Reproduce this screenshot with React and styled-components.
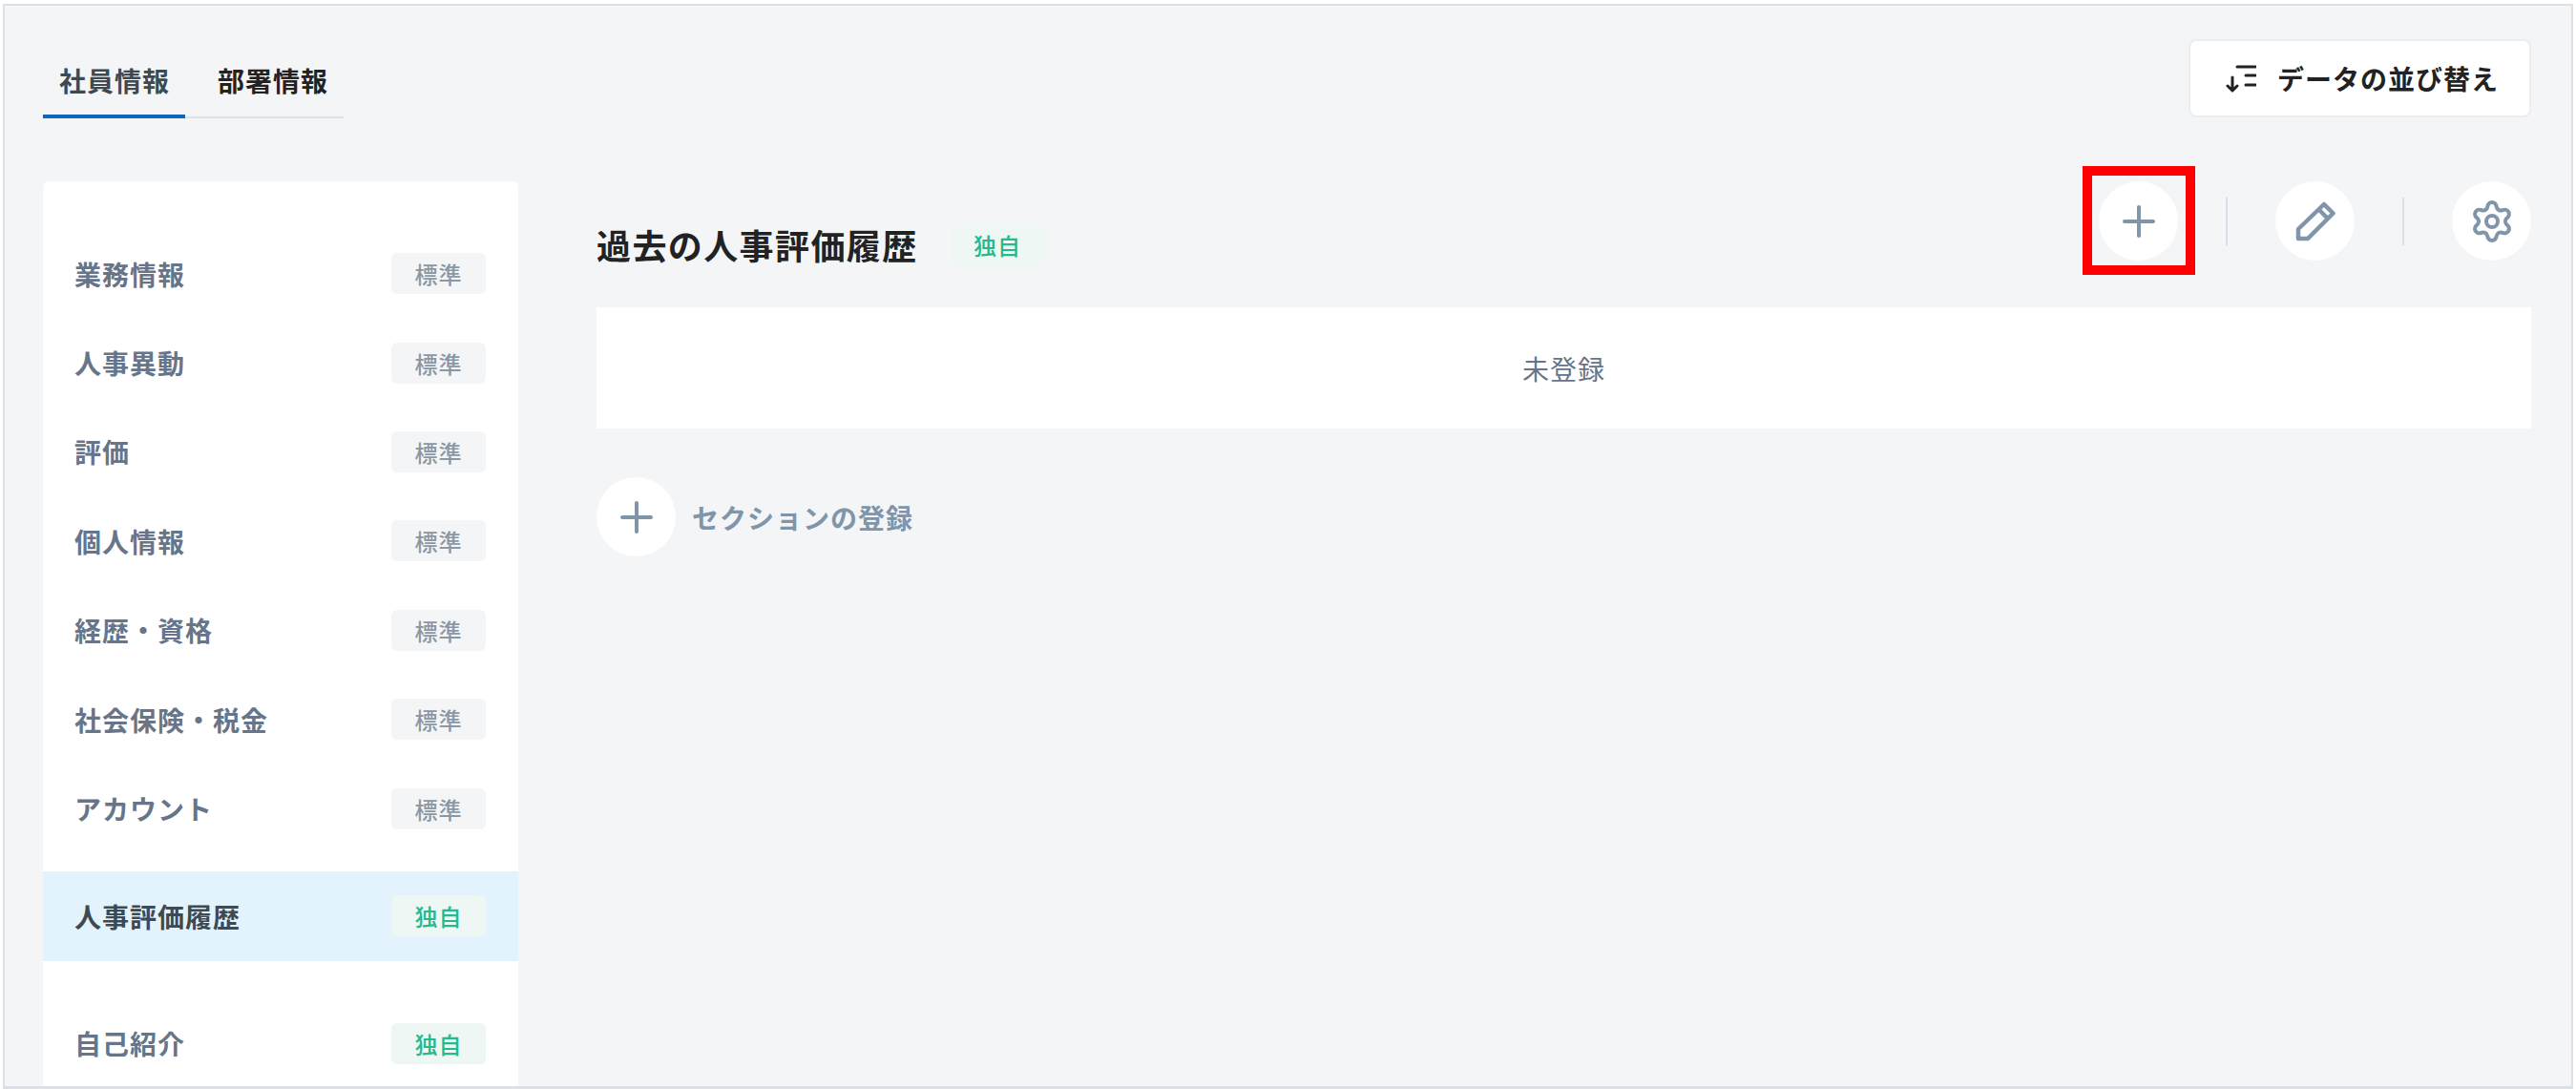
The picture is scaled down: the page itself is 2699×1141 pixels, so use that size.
import styled, { createGlobalStyle } from "styled-components";
import { Settings } from "lucide-react";

const GlobalStyle = createGlobalStyle`
  html, body {
    margin: 0;
    padding: 0;
    height: 100%;
    overflow: hidden;
    background: #ffffff;
  }
  * {
    box-sizing: border-box;
  }
`;

const standardItems = ["業務情報", "人事異動", "評価", "個人情報", "経歴・資格", "社会保険・税金", "アカウント"];

function Plus() {
  return (
    <svg width="34" height="34" viewBox="0 0 34 34" fill="none" stroke="#8095aa" strokeWidth="4" strokeLinecap="round">
      <path d="M17 2v30M2 17h30" />
    </svg>
  );
}

function Pencil() {
  return (
    <svg width="42" height="42" viewBox="0 0 42 42" fill="none" stroke="#8095aa" strokeWidth="4.500" strokeLinejoin="round">
      <path d="M30 3 39.500 12.500 13 39H3V29Z" />
      <path d="M24.500 8.500 34 18" />
    </svg>
  );
}

function SortIcon() {
  return (
    <svg width="32" height="30" viewBox="0 0 32 30" fill="none" stroke="#222222" strokeWidth="3" strokeLinecap="round" strokeLinejoin="round">
      <path d="M12 3h19M21 12h10M21 22h10" />
      <path d="M7 14v14M2 23l5 5 5-5" />
    </svg>
  );
}

export default function App() {
  return (
    <>
      <GlobalStyle />
      <Frame>
        <Header>
          <Tabs>
            <Tab $active>社員情報</Tab>
            <Tab>部署情報</Tab>
          </Tabs>
          <SortButton>
            <SortIcon />
            データの並び替え
          </SortButton>
        </Header>
        <Body>
          <Sidebar>
            {standardItems.map((item) => (
              <NavRow key={item}>
                {item}
                <Badge>標準</Badge>
              </NavRow>
            ))}
            <NavRow $active>
              人事評価履歴
              <Badge $own>独自</Badge>
            </NavRow>
            <NavRow $spaced>
              自己紹介
              <Badge $own>独自</Badge>
            </NavRow>
          </Sidebar>
          <Main>
            <TitleRow>
              <TitleGroup>
                <Title>過去の人事評価履歴</Title>
                <Badge $own>独自</Badge>
              </TitleGroup>
              <Actions>
                <Highlighted>
                  <CircleButton>
                    <Plus />
                  </CircleButton>
                  <RedBox />
                </Highlighted>
                <Separator />
                <CircleButton>
                  <Pencil />
                </CircleButton>
                <Separator />
                <CircleButton>
                  <Settings size={48} color="#8095aa" strokeWidth={2} />
                </CircleButton>
              </Actions>
            </TitleRow>
            <EmptyCard>未登録</EmptyCard>
            <AddSection>
              <CircleButton>
                <Plus />
              </CircleButton>
              セクションの登録
            </AddSection>
          </Main>
        </Body>
      </Frame>
    </>
  );
}

const Frame = styled.div`
  height: 1137px;
  margin: 4px 3px 0 3px;
  padding: 36px 42px 0 40px;
  background: #f3f5f7;
  border: 2px solid #dcdfe3;
  border-bottom-width: 3px;
  overflow: hidden;
  font-family: "Noto Sans CJK JP", "Noto Sans", sans-serif;
  display: flex;
  flex-direction: column;
`;

const Header = styled.div`
  display: flex;
  justify-content: space-between;
  align-items: flex-start;
  flex-shrink: 0;
  height: 148px;
`;

const Tabs = styled.div`
  display: flex;
  margin-top: 16px;
  width: 315px;
  height: 66px;
  border-bottom: 2px solid #dde2ea;
`;

const Tab = styled.div`
  height: 66px;
  flex-shrink: 0;
  padding: 6px 0 0 ${(p) => (p.$active ? "17px" : "34px")};
  width: ${(p) => (p.$active ? "149px" : "166px")};
  font-size: 28px;
  line-height: 40px;
  font-weight: 700;
  letter-spacing: 1px;
  color: ${(p) => (p.$active ? "#3d4a52" : "#222222")};
  border-bottom: ${(p) => (p.$active ? "4px solid #0b68c0" : "none")};
`;

const SortButton = styled.div`
  display: flex;
  align-items: center;
  gap: 22px;
  width: 359px;
  height: 82px;
  margin-top: -1px;
  padding-left: 37px;
  background: #ffffff;
  border: 2px solid #ebedf0;
  border-radius: 8px;
  font-size: 28px;
  font-weight: 700;
  letter-spacing: 1px;
  color: #222222;
`;

const Body = styled.div`
  display: flex;
  gap: 82px;
  flex: 1;
`;

const Sidebar = styled.div`
  width: 498px;
  flex-shrink: 0;
  padding-top: 50px;
  background: #ffffff;
  border-radius: 6px 6px 0 0;
`;

const NavRow = styled.div`
  display: flex;
  justify-content: space-between;
  align-items: center;
  height: 93.4px;
  padding: 0 34px 0 33px;
  margin-top: ${(p) => (p.$active ? "19.500px" : p.$spaced ? "40px" : "0")};
  font-size: 28px;
  font-weight: 700;
  letter-spacing: 1px;
  color: ${(p) => (p.$active ? "#3d4a52" : "#66758a")};
  background: ${(p) => (p.$active ? "#e3f3fe" : "transparent")};
`;

const Badge = styled.span`
  display: flex;
  align-items: center;
  justify-content: center;
  width: 99px;
  height: 43px;
  border-radius: 6px;
  font-size: 24px;
  font-weight: 500;
  letter-spacing: 1px;
  color: ${(p) => (p.$own ? "#25b98f" : "#8b97a3")};
  background: ${(p) => (p.$own ? "#eef7f4" : "#f3f5f7")};
`;

const Main = styled.div`
  flex: 1;
  min-width: 0;
`;

const TitleRow = styled.div`
  display: flex;
  justify-content: space-between;
  align-items: flex-start;
  height: 132px;
`;

const TitleGroup = styled.div`
  display: flex;
  align-items: center;
  gap: 34px;
  margin-top: 45px;
`;

const Title = styled.h2`
  margin: 0;
  font-size: 36px;
  line-height: 43px;
  font-weight: 700;
  letter-spacing: 1.4px;
  color: #222222;
`;

const Actions = styled.div`
  display: flex;
  align-items: center;
  gap: 50px;
`;

const Highlighted = styled.div`
  position: relative;
`;

const RedBox = styled.div`
  position: absolute;
  left: -17px;
  top: -16px;
  width: 118px;
  height: 114px;
  border: 10px solid #ff0000;
`;

const CircleButton = styled.div`
  display: flex;
  align-items: center;
  justify-content: center;
  width: 83px;
  height: 83px;
  border-radius: 50%;
  background: #ffffff;
`;

const Separator = styled.div`
  width: 2px;
  height: 50px;
  background: #d8dfe8;
`;

const EmptyCard = styled.div`
  display: flex;
  align-items: center;
  justify-content: center;
  height: 127px;
  background: #ffffff;
  font-size: 28px;
  letter-spacing: 1px;
  color: #66758a;
`;

const AddSection = styled.div`
  display: flex;
  align-items: center;
  gap: 17px;
  margin-top: 51px;
  font-size: 28px;
  font-weight: 700;
  letter-spacing: 1px;
  color: #8095aa;
`;
